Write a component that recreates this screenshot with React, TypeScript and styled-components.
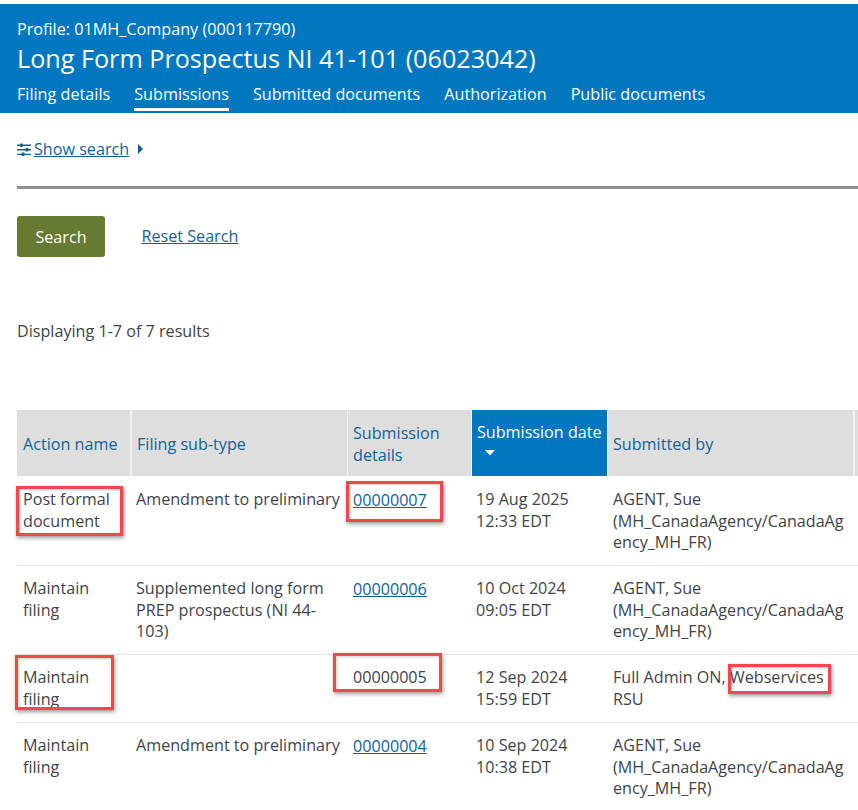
import React from "react";
import styled, { createGlobalStyle } from "styled-components";

const Global = createGlobalStyle`
  html, body { margin: 0; padding: 0; background: #fff; }
  body { font-family: "Open Sans", "Liberation Sans", sans-serif; font-size: 16.15px; color: #3f4448; }
  * { box-sizing: border-box; }
`;
const Page = styled.div`
  position: relative;
  width: 858px;
  height: 810px;
  overflow: hidden;
  padding-top: 4px;
`;
const Header = styled.header`
  height: 109px;
  background: #0077c0;
  color: #fff;
  padding: 15px 0 0 17px;
`;
const Profile = styled.div`
  font-size: 16.2px;
  line-height: 20px;
`;
const Title = styled.h1`
  margin: 1px 0 0;
  font-size: 25.2px;
  font-weight: 400;
  line-height: 36px;
`;
const Tabs = styled.nav`
  display: flex;
  gap: 24px;
  margin-top: 7px;
`;
const Tab = styled.a<{ $active?: boolean }>`
  font-size: 16.2px;
  line-height: 22px;
  padding-bottom: 3px;
  border-bottom: 3px solid ${(p) => (p.$active ? "#fff" : "transparent")};
`;
const Main = styled.main`
  padding: 0 0 0 17px;
`;
const SearchToggle = styled.div`
  display: flex;
  align-items: center;
  height: 22px;
  margin-top: 25px;
`;
const Link = styled.a`
  color: #0f6399;
  text-decoration: underline;
  line-height: 22px;
`;
const ResetLink = styled(Link)`
  margin-top: -1px;
`;
const Divider = styled.hr`
  margin: 26px 0 0;
  border: 0;
  height: 3px;
  background: #8f8f92;
`;
const Actions = styled.div`
  display: flex;
  align-items: center;
  margin-top: 27px;
  gap: 36.5px;
`;
const Button = styled.button`
  width: 88px;
  height: 41px;
  background: #667a33;
  color: #fff;
  border: 0;
  border-radius: 3px;
  font: inherit;
`;
const Results = styled.p`
  margin: 63px 0 0;
  line-height: 22px;
`;
const TableWrap = styled.div`
  margin-top: 68px;
  width: 841px;
  overflow: hidden;
`;
const Table = styled.table`
  table-layout: fixed;
  width: 1000px;
  border-collapse: separate;
  border-spacing: 0;
`;
const Th = styled.th<{ $sorted?: boolean }>`
  height: 66px;
  padding: ${(p) => (p.$sorted ? "11px 0 0 5px" : "2px 0 0 5px")};
  font-weight: 400;
  line-height: 22px;
  text-align: left;
  vertical-align: ${(p) => (p.$sorted ? "top" : "middle")};
  background: ${(p) => (p.$sorted ? "#0077c0" : "#dedede")};
  color: ${(p) => (p.$sorted ? "#fff" : "#0f6399")};
  border-right: 1px solid #f2f2f2;
  &:first-child { padding-left: 6px; border-right-width: 2px; }
  &:nth-child(5) { border-right-width: 2px; }
`;
const Td = styled.td`
  padding: 13px 6px 0 5px;
  line-height: 21.6px;
  vertical-align: top;
  border-bottom: 1px solid #e3e3e3;
  overflow-wrap: anywhere;
  tr + tr & { padding-top: 12px; }
  &:first-child { padding-left: 6px; }
  &:nth-child(2), &:nth-child(4) { padding-left: 4px; }
`;
const SortMark = styled.svg`
  display: block;
  margin: 7px 0 0 8px;
`;
const Note = styled.div<{ $x: number; $y: number; $w: number; $h: number }>`
  position: absolute;
  left: ${(p) => p.$x}px;
  top: ${(p) => p.$y}px;
  width: ${(p) => p.$w}px;
  height: ${(p) => p.$h}px;
  border: 3px solid #f4474b;
  box-shadow: 1px 2px 4px rgba(0, 0, 0, 0.4), inset 1px 1px 3px rgba(0, 0, 0, 0.2);
`;

const SlidersIcon = () => (
  <svg width="14" height="13" viewBox="0 0 14 13" style={{ marginRight: 3, marginTop: 1 }}>
    <path d="M0 2.2h14M0 6.8h14M0 11.4h14" stroke="#0f6399" strokeWidth="1.4" />
    <rect x="3" y="0.4" width="3" height="3.6" rx="0.8" fill="#0f6399" />
    <rect x="8.5" y="5" width="3" height="3.6" rx="0.8" fill="#0f6399" />
    <rect x="4.5" y="9.4" width="3" height="3.6" rx="0.8" fill="#0f6399" />
  </svg>
);

const rows = [
  { h: 90, action: "Post formal document", sub: "Amendment to preliminary", id: "00000007", link: true, date: ["19 Aug 2025", "12:33 EDT"], by: "AGENT, Sue (MH_CanadaAgency/CanadaAgency_MH_FR)" },
  { h: 89, action: "Maintain filing", sub: "Supplemented long form PREP prospectus (NI 44-103)", id: "00000006", link: true, date: ["10 Oct 2024", "09:05 EDT"], by: "AGENT, Sue (MH_CanadaAgency/CanadaAgency_MH_FR)" },
  { h: 68, action: "Maintain filing", sub: "", id: "00000005", link: false, date: ["12 Sep 2024", "15:59 EDT"], by: "Full Admin ON, Webservices RSU" },
  { h: 89, action: "Maintain filing", sub: "Amendment to preliminary", id: "00000004", link: true, date: ["10 Sep 2024", "10:38 EDT"], by: "AGENT, Sue (MH_CanadaAgency/CanadaAgency_MH_FR)" },
];
const notes = [
  [16, 486, 107, 50], [346, 481, 97, 41], [15, 655, 99, 55], [333, 653, 109, 39], [728, 664, 103, 30],
];

export default function App() {
  return (
    <Page>
      <Global />
      <Header>
        <Profile>Profile: 01MH_Company (000117790)</Profile>
        <Title>Long Form Prospectus NI 41-101 (06023042)</Title>
        <Tabs>
          <Tab>Filing details</Tab>
          <Tab $active>Submissions</Tab>
          <Tab>Submitted documents</Tab>
          <Tab>Authorization</Tab>
          <Tab>Public documents</Tab>
        </Tabs>
      </Header>
      <Main>
        <SearchToggle>
          <SlidersIcon />
          <Link>Show search</Link>
          <svg width="7" height="10" viewBox="0 0 7 10" style={{ marginLeft: 8 }}>
            <path d="M1 0l5 5-5 5z" fill="#0f5f96" />
          </svg>
        </SearchToggle>
        <Divider />
        <Actions>
          <Button>Search</Button>
          <ResetLink>Reset Search</ResetLink>
        </Actions>
        <Results>Displaying 1-7 of 7 results</Results>
        <TableWrap>
          <Table>
            <colgroup>
              <col style={{ width: 115 }} />
              <col style={{ width: 216 }} />
              <col style={{ width: 124 }} />
              <col style={{ width: 136 }} />
              <col style={{ width: 247 }} />
              <col />
            </colgroup>
            <thead>
              <tr>
                <Th>Action name</Th>
                <Th>Filing sub-type</Th>
                <Th>Submission details</Th>
                <Th $sorted>
                  Submission date
                  <SortMark width="10" height="6" viewBox="0 0 10 6">
                    <path d="M0 0h10L5 5.5z" fill="#fff" />
                  </SortMark>
                </Th>
                <Th>Submitted by</Th>
                <Th />
              </tr>
            </thead>
            <tbody>
              {rows.map((r) => (
                <tr key={r.id} style={{ height: r.h }}>
                  <Td>{r.action}</Td>
                  <Td>{r.sub}</Td>
                  <Td>{r.link ? <Link>{r.id}</Link> : r.id}</Td>
                  <Td>{r.date[0]}<br />{r.date[1]}</Td>
                  <Td>{r.by}</Td>
                  <Td />
                </tr>
              ))}
            </tbody>
          </Table>
        </TableWrap>
      </Main>
      {notes.map(([x, y, w, h]) => (
        <Note key={`${x}-${y}`} $x={x} $y={y} $w={w} $h={h} />
      ))}
    </Page>
  );
}
